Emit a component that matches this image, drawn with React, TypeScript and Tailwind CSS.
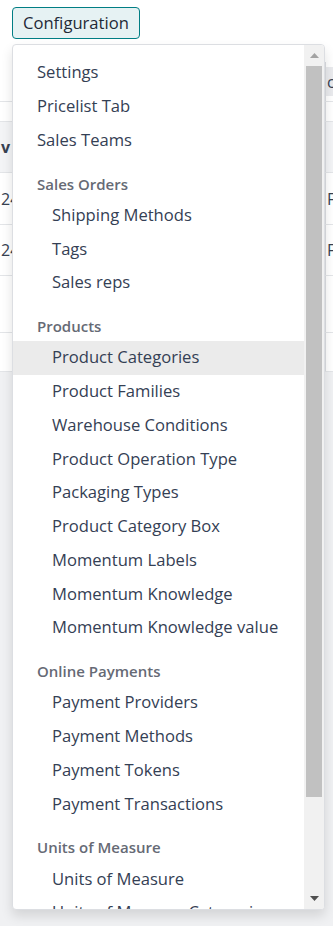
import React from "react";

type Entry =
  | { kind: "item"; label: string; indent?: boolean; active?: boolean }
  | { kind: "header"; label: string };

const MENU: Entry[] = [
  { kind: "item", label: "Settings" },
  { kind: "item", label: "Pricelist Tab" },
  { kind: "item", label: "Sales Teams" },
  { kind: "header", label: "Sales Orders" },
  { kind: "item", label: "Shipping Methods", indent: true },
  { kind: "item", label: "Tags", indent: true },
  { kind: "item", label: "Sales reps", indent: true },
  { kind: "header", label: "Products" },
  { kind: "item", label: "Product Categories", indent: true, active: true },
  { kind: "item", label: "Product Families", indent: true },
  { kind: "item", label: "Warehouse Conditions", indent: true },
  { kind: "item", label: "Product Operation Type", indent: true },
  { kind: "item", label: "Packaging Types", indent: true },
  { kind: "item", label: "Product Category Box", indent: true },
  { kind: "item", label: "Momentum Labels", indent: true },
  { kind: "item", label: "Momentum Knowledge", indent: true },
  { kind: "item", label: "Momentum Knowledge value", indent: true },
  { kind: "header", label: "Online Payments" },
  { kind: "item", label: "Payment Providers", indent: true },
  { kind: "item", label: "Payment Methods", indent: true },
  { kind: "item", label: "Payment Tokens", indent: true },
  { kind: "item", label: "Payment Transactions", indent: true },
  { kind: "header", label: "Units of Measure" },
  { kind: "item", label: "Units of Measure", indent: true },
  { kind: "item", label: "Units of Measure Categories", indent: true },
];

// rows of the list view that peeks out behind the dropdown
const ROWS = [
  { h: "h-[40px]", left: "", right: "c", rightHead: true },
  { h: "h-[20px]", left: "", right: "" },
  { h: "h-[51px]", left: "v", right: "", head: true },
  { h: "h-[52px]", left: "24", right: "F" },
  { h: "h-[51px]", left: "24", right: "F" },
  { h: "h-[57px]", left: "", right: "" },
  { h: "h-[39px]", left: "", right: "" },
];

function Background() {
  return (
    <div className="flex min-h-[926px] flex-col bg-[#f0f1f3]">
      <div className="h-[62px] bg-white" />
      <div className="flex flex-col bg-white">
        {ROWS.map((r, i) => (
          <div
            key={i}
            className={`flex ${r.h} border-b border-[#e3e5e8] ${r.head ? "bg-[#f3f4f6]" : ""}`}
          >
            <div className={`flex w-[12px] items-center overflow-hidden pl-[1px] text-[16px] text-[#374151] ${r.head ? "font-bold text-[#111827]" : ""}`}>
              {r.left}
            </div>
            <div className="flex-1" />
            <div className="flex w-[8px] border-l border-[#dcdee2]">
              <div
                className={`flex w-full items-center overflow-hidden pl-[1px] text-[16px] text-[#374151] ${
                  r.rightHead ? "my-[5px] bg-[#e9eaed]" : ""
                }`}
              >
                {r.right}
              </div>
            </div>
          </div>
        ))}
      </div>
    </div>
  );
}

function Scrollbar() {
  return (
    <div className="flex w-[20px] flex-col bg-[#f1f1f1]">
      <div className="flex h-[21px] items-center justify-center">
        <svg width="9" height="5" viewBox="0 0 9 5">
          <path d="M0 5 L4.5 0 L9 5 Z" fill="#a3a3a3" />
        </svg>
      </div>
      <div className="mx-[2px] h-[731px] bg-[#c1c1c1]" />
      <div className="flex-1" />
      <div className="flex h-[22px] items-center justify-center">
        <svg width="9" height="5" viewBox="0 0 9 5">
          <path d="M0 0 L9 0 L4.5 5 Z" fill="#505050" />
        </svg>
      </div>
    </div>
  );
}

export default function App() {
  return (
    <div className="relative h-[926px] overflow-hidden font-['Open_Sans',sans-serif]">
      <Background />

      {/* Configuration toggle */}
      <button className="absolute left-[12px] top-[7px] flex h-[32px] items-center rounded-[4px] border border-[#017e84] bg-[#e6f2f3] px-[10px] text-[16.6px] text-[#1f2937]">
        Configuration
      </button>

      {/* Dropdown */}
      <div className="absolute left-[12px] top-[44px] flex h-[866px] w-[313px] overflow-hidden rounded-[4px] border border-[#dcdee2] bg-white shadow-[0_6px_12px_rgba(0,0,0,0.12)]">
        <div className="flex-1 overflow-hidden pt-[11px]">
          {MENU.map((e, i) =>
            e.kind === "header" ? (
              <div
                key={i}
                className="flex h-[41.25px] items-end pb-[2px] pl-[24px] text-[15px] font-semibold leading-[26px] text-[#666a75]"
              >
                {e.label}
              </div>
            ) : (
              <div
                key={i}
                className={`flex h-[33.75px] items-center whitespace-nowrap text-[16.6px] text-[#344054] ${
                  e.indent ? "pl-[39px]" : "pl-[24px]"
                } ${e.active ? "bg-[#ebebeb]" : ""}`}
              >
                {e.label}
              </div>
            )
          )}
        </div>
        <Scrollbar />
      </div>
    </div>
  );
}
